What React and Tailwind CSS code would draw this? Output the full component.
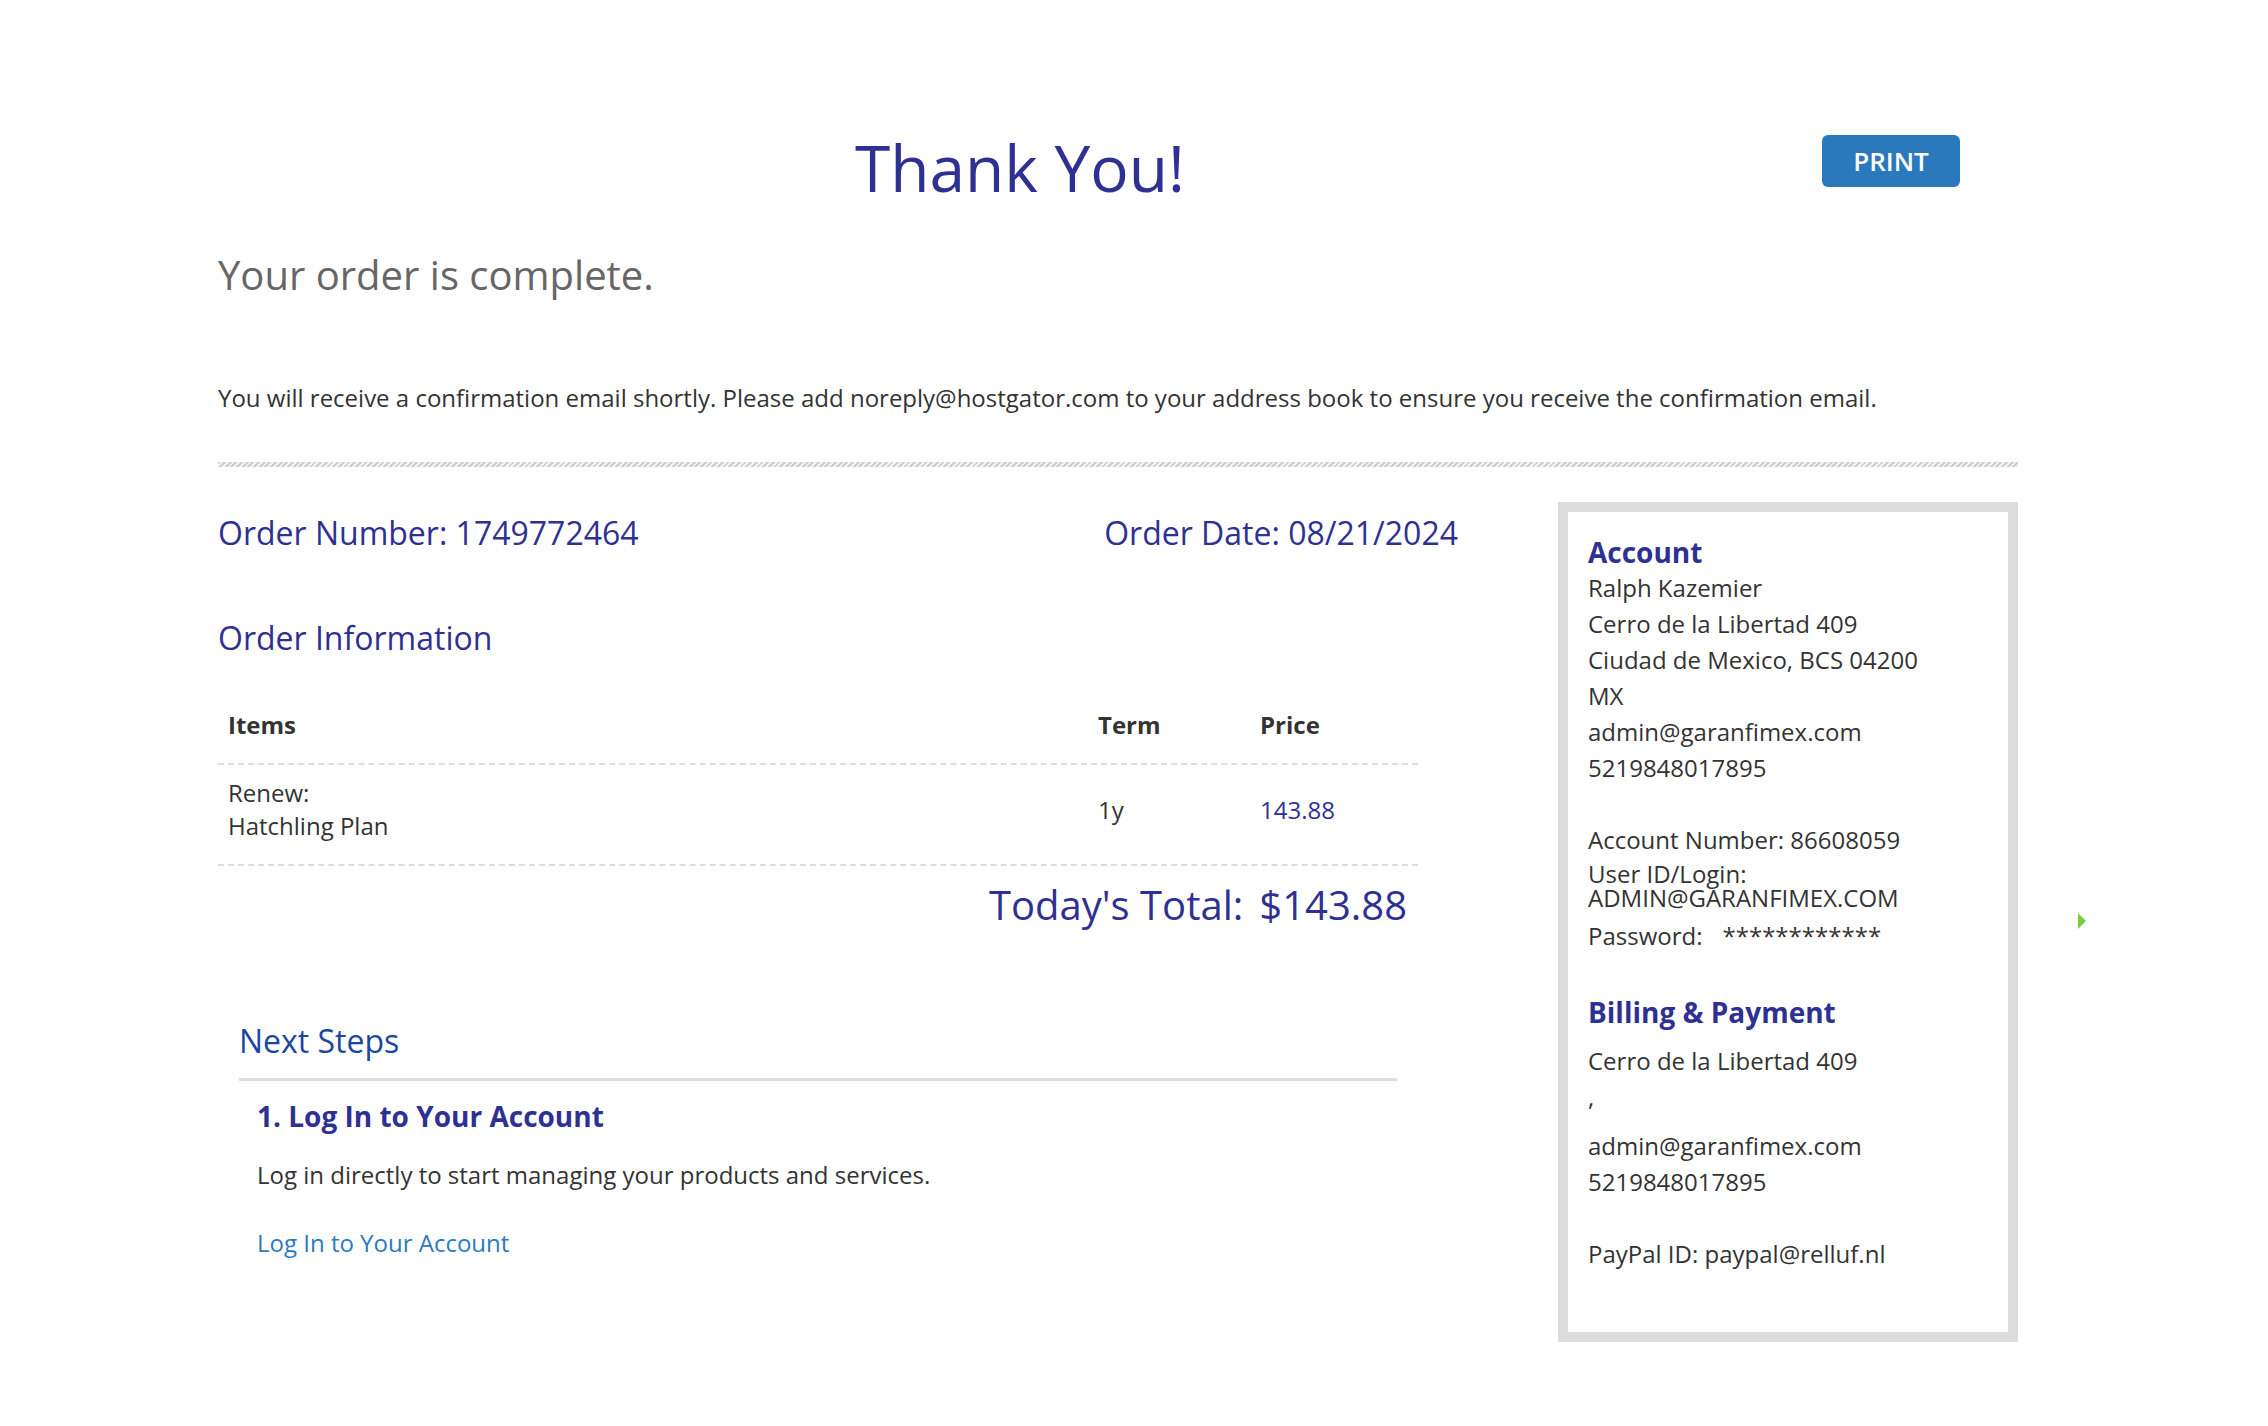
import React from 'react';

const PURPLE = 'text-[#2e3192]';

export default function App() {
  return (
    <div className="relative min-h-[1426px] bg-white font-['Open_Sans',sans-serif] text-[#333]">
      <div className="w-[1800px] ml-[218px] pt-[132px]">
        {/* Header */}
        <div className="flex items-start pr-[58px]">
          <h1 className={`flex-1 text-center text-[64px] leading-[72px] ${PURPLE}`}>Thank You!</h1>
          <button className="mt-[3px] w-[138px] h-[52px] rounded-[6px] bg-[#2b79bd] text-white text-[26px] font-semibold leading-none">
            PRINT
          </button>
        </div>

        <h2 className="mt-[44px] text-[40px] leading-[54px] text-[#666]">Your order is complete.</h2>

        <p className="mt-[80px] text-[24px] leading-[32px] text-[#333]">
          You will receive a confirmation email shortly. Please add noreply@hostgator.com to your address book to ensure you receive the confirmation email.
        </p>

        <div className="mt-[48px] h-[5px] bg-[repeating-linear-gradient(135deg,#cfcfcf_0_2px,#f2f2f2_2px_4px)]" />

        {/* Main */}
        <div className="mt-[35px] flex items-start">
          <div className="w-[1240px] pt-[9px]">
            <div className={`flex justify-between text-[32px] leading-[44px] ${PURPLE}`}>
              <span>Order Number: 1749772464</span>
              <span>Order Date: 08/21/2024</span>
            </div>

            <h3 className={`mt-[61px] text-[32px] leading-[44px] ${PURPLE}`}>Order Information</h3>

            <div className="w-[1200px] mt-[26px]">
              <div className="flex items-center h-[79px] border-b-2 border-dashed border-[#dddddd] text-[24px] font-bold text-[#333]">
                <div className="w-[870px] pl-[10px]">Items</div>
                <div className="w-[162px] pl-[10px]">Term</div>
                <div className="flex-1 pl-[10px]">Price</div>
              </div>
              <div className="flex items-center pt-[11px] pb-[22px] border-b-2 border-dashed border-[#dddddd] text-[24px] leading-[33px]">
                <div className="w-[870px] pl-[10px]">
                  <div>Renew:</div>
                  <div>Hatchling Plan</div>
                </div>
                <div className="w-[162px] pl-[10px]">1y</div>
                <div className={`flex-1 pl-[10px] ${PURPLE}`}>143.88</div>
              </div>
              <div className={`mt-[12px] flex justify-end gap-[16px] pr-[11px] text-[40px] leading-[54px] ${PURPLE}`}>
                <span>Today's Total:</span>
                <span>$143.88</span>
              </div>

              {/* Next steps */}
              <div className="mx-[21px] mt-[87px]">
                <h3 className="pb-[15px] border-b-[3px] border-[#dddddd] text-[32px] leading-[44px] text-[#1a47a0]">Next Steps</h3>
                <div className="pl-[18px]">
                  <h4 className={`mt-[15px] text-[28px] leading-[40px] font-bold ${PURPLE}`}>1. Log In to Your Account</h4>
                  <p className="mt-[22px] text-[24px] leading-[34px]">Log in directly to start managing your products and services.</p>
                  <a href="#" className="block mt-[34px] text-[24px] leading-[34px] text-[#2b7bc0]">Log In to Your Account</a>
                </div>
              </div>
            </div>
          </div>

          {/* Sidebar */}
          <aside className="ml-auto w-[460px] border-[10px] border-[#dcdcdc] pl-[20px] pt-[22px] pb-[60px] text-[24px] leading-[36px] text-[#333]">
            <h4 className={`text-[28px] font-bold leading-[36px] ${PURPLE}`}>Account</h4>
            <div>
              <div>Ralph Kazemier</div>
              <div>Cerro de la Libertad 409</div>
              <div>Ciudad de Mexico, BCS 04200</div>
              <div>MX</div>
              <div>admin@garanfimex.com</div>
              <div>5219848017895</div>
              <div className="h-[36px]" />
              <div>Account Number: 86608059</div>
            </div>
            <div className="mt-[4px] leading-[24px]">
              User ID/Login:
              <br />
              ADMIN@GARANFIMEX.COM
            </div>
            <div className="mt-[8px] flex gap-[20px]">
              <span>Password:</span>
              <span>************</span>
            </div>

            <h4 className={`mt-[40px] text-[28px] font-bold leading-[36px] ${PURPLE}`}>Billing &amp; Payment</h4>
            <div className="mt-[13px]">
              <div>Cerro de la Libertad 409</div>
              <div>,</div>
            </div>
            <div className="mt-[13px]">
              <div>admin@garanfimex.com</div>
              <div>5219848017895</div>
              <div className="h-[36px]" />
              <div>PayPal ID: paypal@relluf.nl</div>
            </div>
          </aside>
        </div>
      </div>

      {/* floating handle */}
      <div className="absolute left-[2078px] top-[913px] w-0 h-0 border-y-[8px] border-y-transparent border-l-[8px] border-l-[#7acc45]" />
    </div>
  );
}
